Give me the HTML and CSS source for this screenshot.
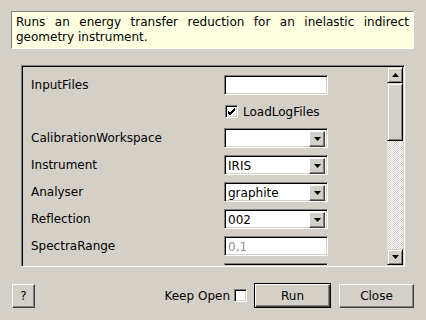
FILE: index.html
```html
<!DOCTYPE html>
<html lang="en">
<head>
  <meta charset="UTF-8" />
  <title>IndirectILLReduction input dialog</title>
  <link rel="stylesheet" href="styles.css">
</head>
<body>
  <div class="dialog">
    <p class="desc">Runs an energy transfer reduction for an inelastic indirect geometry instrument.</p>

    <div class="panel">
      <div class="props">
        <span class="label">InputFiles</span>
        <span class="field"></span>

        <span></span>
        <label class="check-row"><span class="check checked"><svg width="9" height="9" viewBox="0 0 9 9"><path d="M1 4 L3 6 L8 1 M1 5 L3 7 L8 2 M1 6 L3 8 L8 3" stroke="#000" stroke-width="1" fill="none"/></svg></span>LoadLogFiles</label>

        <span class="label">CalibrationWorkspace</span>
        <span class="field combo"><span class="value"></span><span class="drop"><svg width="7" height="4" viewBox="0 0 7 4"><path d="M0 0 H7 L3.5 4 Z" fill="#000"/></svg></span></span>

        <span class="label">Instrument</span>
        <span class="field combo"><span class="value">IRIS</span><span class="drop"><svg width="7" height="4" viewBox="0 0 7 4"><path d="M0 0 H7 L3.5 4 Z" fill="#000"/></svg></span></span>

        <span class="label">Analyser</span>
        <span class="field combo"><span class="value">graphite</span><span class="drop"><svg width="7" height="4" viewBox="0 0 7 4"><path d="M0 0 H7 L3.5 4 Z" fill="#000"/></svg></span></span>

        <span class="label">Reflection</span>
        <span class="field combo"><span class="value">002</span><span class="drop"><svg width="7" height="4" viewBox="0 0 7 4"><path d="M0 0 H7 L3.5 4 Z" fill="#000"/></svg></span></span>

        <span class="label">SpectraRange</span>
        <span class="field"><span class="value hint">0,1</span></span>

        <span></span>
        <span class="field"></span>
      </div>

      <div class="scrollbar">
        <span class="sb-btn"><svg width="7" height="4" viewBox="0 0 7 4"><path d="M0 4 H7 L3.5 0 Z" fill="#000"/></svg></span>
        <span class="sb-thumb"></span>
        <span class="sb-track"></span>
        <span class="sb-btn"><svg width="7" height="4" viewBox="0 0 7 4"><path d="M0 0 H7 L3.5 4 Z" fill="#000"/></svg></span>
      </div>
    </div>

    <div class="actions">
      <button class="btn help">?</button>
      <label class="keep">Keep Open <span class="check"></span></label>
      <button class="btn default run">Run</button>
      <button class="btn close">Close</button>
    </div>
  </div>
</body>
</html>
```

FILE: styles.css
```css
body {
  margin: 0;
  background: #d4d0c8;
  font-family: 'DejaVu Sans', sans-serif;
  font-size: 12px;
  color: #000;
}

.dialog {
  width: 426px;
  height: 320px;
  box-sizing: border-box;
  padding: 11px 12px 0 11px;
}

.desc {
  margin: 0;
  height: 38px;
  box-sizing: border-box;
  padding: 3px 4px 0 4px;
  line-height: 15px;
  text-align: justify;
  background: #ffffe1;
  border: 1px solid;
  border-color: #808080 #ffffff #ffffff #808080;
}

.panel {
  display: flex;
  margin: 16px 0 0 10px;
  width: 384px;
  height: 202px;
  box-sizing: border-box;
  border: 1px solid;
  border-color: #808080 #ffffff #ffffff #808080;
  box-shadow: inset 1px 1px #000, inset -1px -1px #d4d0c8;
  padding: 1px;
}

.props {
  flex: 1;
  overflow: hidden;
  display: grid;
  grid-template-columns: 193px 104px;
  grid-template-rows: 20px 19px;
  grid-auto-rows: 20px;
  row-gap: 7px;
  padding: 8px 0 0 8px;
  align-items: center;
}

.label {
  line-height: 20px;
}

.field {
  display: flex;
  height: 20px;
  box-sizing: border-box;
  background: #fff;
  border: 1px solid;
  border-color: #808080 #ffffff #ffffff #808080;
  box-shadow: inset 1px 1px #000, inset -1px -1px #d4d0c8;
  padding: 2px;
}

.value {
  flex: 1;
  line-height: 16px;
  padding-left: 1px;
}

.hint {
  color: #8f8f8f;
}

.drop {
  width: 16px;
  height: 16px;
  box-sizing: border-box;
  display: flex;
  align-items: center;
  justify-content: center;
  background: #d4d0c8;
  border: 1px solid;
  border-color: #fff #404040 #404040 #fff;
  box-shadow: inset -1px -1px #808080;
}

.check-row {
  display: flex;
  align-items: center;
  gap: 5px;
  margin-left: 1px;
}

.check {
  display: inline-flex;
  align-items: center;
  justify-content: center;
  width: 13px;
  height: 13px;
  box-sizing: border-box;
  background: #fff;
  border: 1px solid;
  border-color: #808080 #ffffff #ffffff #808080;
  box-shadow: inset 1px 1px #000, inset -1px -1px #d4d0c8;
}

.scrollbar {
  width: 16px;
  display: flex;
  flex-direction: column;
}

.sb-btn,
.sb-thumb {
  box-sizing: border-box;
  background: #d4d0c8;
  border: 1px solid;
  border-color: #d4d0c8 #000 #000 #d4d0c8;
  box-shadow: inset 1px 1px #fff, inset -1px -1px #808080;
}

.sb-btn {
  height: 16px;
  display: flex;
  align-items: center;
  justify-content: center;
}

.sb-thumb {
  height: 58px;
}

.sb-track {
  flex: 1;
  background: repeating-conic-gradient(#ffffff 0 25%, #d4d0c8 0 50%) 0 0 / 2px 2px;
}

.actions {
  display: flex;
  align-items: center;
  margin-top: 16px;
  padding-left: 1px;
}

.btn {
  font-family: 'DejaVu Sans', sans-serif;
  font-size: 12px;
  color: #000;
  height: 25px;
  padding: 0;
  background: #d4d0c8;
  border: 1px solid;
  border-color: #fff #404040 #404040 #fff;
  box-shadow: inset -1px -1px #808080;
}

.help {
  width: 23px;
  height: 24px;
}

.keep {
  display: flex;
  align-items: center;
  gap: 4px;
  margin-left: auto;
  margin-right: 7px;
}

.default {
  border-color: #000;
  box-shadow: inset 1px 1px #fff, inset -1px -1px #404040, inset -2px -2px #808080;
}

.run {
  width: 77px;
  margin-right: 8px;
}

.close {
  width: 75px;
  height: 24px;
}
```
